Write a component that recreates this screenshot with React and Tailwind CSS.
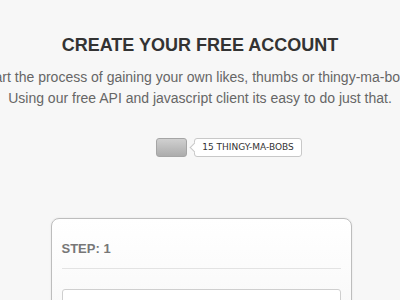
const App = () => {
  return (
    <div className="w-[400px] h-[300px] overflow-hidden bg-[#f7f7f7] font-['Liberation_Sans',Arial,sans-serif]">
      <div className="pt-[35px] flex flex-col items-center">
        <h1 className="text-[18px] leading-[20px] font-bold text-[#333] whitespace-nowrap">CREATE YOUR FREE ACCOUNT</h1>
        <div className="mt-[12px] flex flex-col items-center text-[14px] leading-[21px] text-[#666] whitespace-nowrap">
          <p>Start the process of gaining your own likes, thumbs or thingy-ma-bobs.</p>
          <p>Using our free API and javascript client its easy to do just that.</p>
        </div>
        <div className="mt-[29px] ml-[58px] flex items-center gap-[7px]">
          <button className="w-[31px] h-[19px] rounded-[3px] border border-[#a5a5a5] bg-gradient-to-b from-[#d0d0d0] to-[#acacac]"></button>
          <div className="relative h-[19px] px-[7px] flex items-center rounded-[3px] border border-[#c8c8c8] bg-white text-[9px] text-[#333] font-['DejaVu_Sans',Verdana,sans-serif]">
            <span className="absolute left-[-4px] top-[5px] w-[7px] h-[7px] rotate-45 bg-white border-l border-b border-[#c8c8c8]"></span>
            <span className="relative">15 THINGY-MA-BOBS</span>
          </div>
        </div>
        <div className="mt-[61px] ml-[2px] w-[301px] h-[120px] rounded-[8px] border border-[#bdbdbd] bg-gradient-to-b from-white to-[#f7f7f7] shadow-[0_0_2px_rgba(0,0,0,0.1)] px-[10px]">
          <div className="pt-[22px] pb-[11px] text-[13px] leading-[16px] font-bold text-[#777] border-b border-[#e3e3e3]">STEP: 1</div>
          <div className="mt-[20px] h-[30px] rounded-[3px] border border-[#cfcfcf] bg-white px-[8px] pt-[6px] text-[13px] text-[#999]">Email Address</div>
        </div>
      </div>
    </div>
  );
};

export default App;
